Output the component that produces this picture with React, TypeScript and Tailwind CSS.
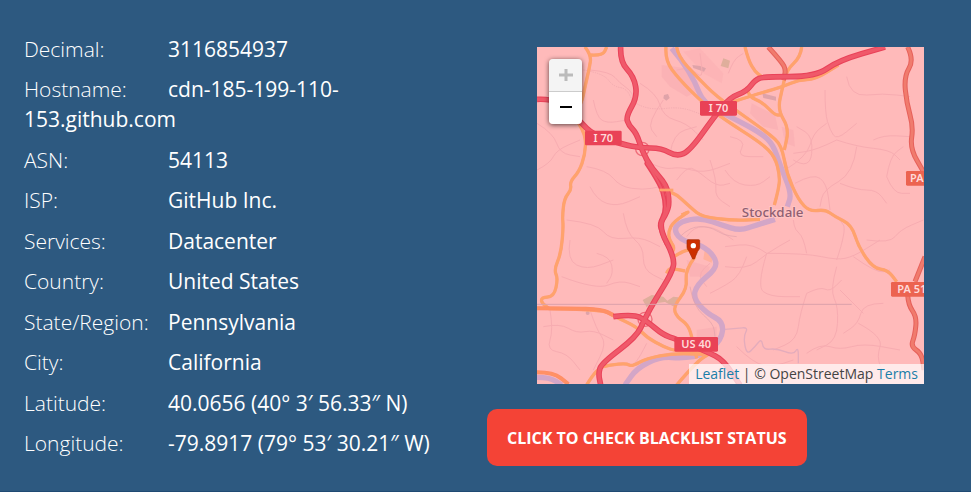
import React from "react";

type Point = [number, number];

// Turns "x,y x,y ..." into a path whose corners are rounded through the midpoints.
function curve(list: string): string {
  const pts = list.split(" ").map((p) => p.split(",").map(Number) as Point);
  let d = `M${pts[0][0]} ${pts[0][1]}`;
  for (let i = 1; i < pts.length - 1; i++) {
    const [x, y] = pts[i];
    const [nx, ny] = pts[i + 1];
    d += ` Q${x} ${y} ${(x + nx) / 2} ${(y + ny) / 2}`;
  }
  const last = pts[pts.length - 1];
  return `${d} L${last[0]} ${last[1]}`;
}

const details: [string, string][] = [
  ["Decimal:", "3116854937"],
  ["Hostname:", "cdn-185-199-110-153.github.com"],
  ["ASN:", "54113"],
  ["ISP:", "GitHub Inc."],
  ["Services:", "Datacenter"],
  ["Country:", "United States"],
  ["State/Region:", "Pennsylvania"],
  ["City:", "California"],
  ["Latitude:", "40.0656 (40° 3′ 56.33″ N)"],
  ["Longitude:", "-79.8917 (79° 53′ 30.21″ W)"],
];

const lanes = [
  "21,390 60,370 80,330 150,300",
  "180,90 240,95 270,130 300,150 310,170",
  "190,180 200,230 230,250 290,240",
  "21,250 70,280 90,340 150,350",
  "170,380 230,390 270,440 340,450 390,440",
  "180,440 200,480 260,500 330,470",
  "340,360 400,390 450,380 520,400 600,370",
  "440,420 470,380 500,390 560,440 600,430",
  "540,360 560,420 555,470 600,500",
  "330,130 380,160 400,230 470,250 520,300",
  "400,180 350,250 380,290",
  "420,340 430,280 500,260",
  "110,540 200,550 240,600 330,590 390,620",
  "280,520 290,580 340,620 340,690 400,720",
  "120,600 110,660 170,690 250,660",
  "95,710 200,750 270,720 330,740",
  "200,640 240,650 250,700 230,730",
  "40,860 90,850 140,880 190,870 250,900",
  "60,810 70,870 50,930 110,940 150,990",
  "180,810 200,870 230,910 190,990",
  "350,910 330,950 310,975",
  "540,760 600,730 630,700 650,650",
  "585,680 650,690 710,640 780,600",
  "710,640 680,740 720,770 810,770",
  "710,640 670,610 585,620",
  "710,640 830,640 920,660 970,650 1050,600",
  "830,640 820,590 795,570 790,540",
  "920,660 950,570 930,540",
  "830,760 810,820 800,900 730,930",
  "920,680 900,750 925,800 920,900 860,930",
  "830,760 870,740 900,755 935,720",
  "1010,600 1080,610 1110,570 1180,540",
  "970,650 1040,700 1080,690",
  "1060,790 1000,790 985,850 940,880",
  "985,850 1060,890 1040,950 1060,1000",
  "1000,820 960,780 930,750",
  "830,940 870,910 930,930 1000,910 1110,930",
  "620,920 670,970 730,980 790,960",
  "885,150 885,220 900,270 920,300 980,250",
  "920,300 980,320 1080,330 1110,360",
  "980,320 970,400 880,450 870,500",
  "920,300 860,330 790,340",
  "950,110 960,170 1060,160 1140,170",
  "1030,300 1060,285 1140,290",
  "1070,410 1080,350 1120,320",
  "1070,410 1090,460 1140,460",
  "930,430 980,450 1040,450 1070,490",
  "765,390 830,350 850,280 890,250",
  "790,360 840,390 850,290 800,260",
  "795,430 850,400 890,430 900,510",
  "600,290 650,300 620,350 700,350",
  "585,390 610,430 680,440 720,410",
  "595,100 610,60 640,40",
  "440,90 480,80 520,120 510,40",
  "470,590 490,560 550,560 610,600",
  "540,670 500,700 530,740",
];

const river = [
  "425,25 455,60 495,125 520,190 605,232 695,280 730,315 750,375 785,460 772,500",
  "735,538 680,555 630,572 575,555 520,535 465,540 430,562 450,600 515,615 555,650 560,685 500,735 490,775 530,820 580,845 575,900 520,945 460,955 390,950 320,985 285,1035",
  "21,1012 60,1012 95,1035",
];

const secondary = [
  "165,21 184,45 178,85 165,140 155,190 130,225 168,285 165,345 147,395 120,425 124,450 103,475 97,530 100,560 93,640 72,690 84,715 72,770 35,772 34,788 57,806",
  "182,45 218,47 230,21",
  "55,806 215,808 255,830 320,860 350,892 400,920 440,934 530,940",
  "170,1035 200,985 240,975 290,970 305,980 350,955 430,940 520,943",
  "440,1035 500,965 540,940",
  "408,21 405,60 445,115 520,190 585,240 695,310 735,350 750,410 745,450 733,495",
  "440,21 445,50 500,110 560,170 645,230 715,280 755,315 770,400 805,480 840,515 885,508 915,530 965,555 985,620 1030,685 1073,690 1100,725",
  "645,21 655,60 675,95 695,110",
  "815,21 812,50 770,90 757,145 743,210 777,265 763,330",
  "610,185 695,158 760,140 805,120 857,118 925,75",
  "650,140 655,170 695,185 735,225 750,225",
  "388,450 425,450 485,505 515,530 610,542 690,538",
  "455,525 490,507 430,545 415,575 418,600 434,622 425,640",
  "432,650 460,632 490,628",
  "495,650 465,690 472,745 430,800 440,830 475,855 488,900 500,955",
  "410,700 415,685 440,688 465,693",
];

const primary = ["21,805 120,805 215,808 250,825", "21,997 70,997 115,1032"];

const trunk = [
  "715,21 755,65 768,90 760,120",
  "1133,21 1152,60 1122,110 1130,190 1150,260 1140,325 1183,400",
  "1185,650 1155,725",
  "1133,765 1135,795 1160,830 1155,885 1142,920 1175,940 1182,990",
];

const motorway = [
  "21,178 60,176 110,200 150,245 190,285 275,312 330,324 395,324 440,350 480,332 553,230 600,172 650,154 675,120 700,110 857,110 925,62 1065,21",
  "272,21 270,65 312,110 322,170 288,230 296,255 320,280 337,335 365,385 410,435 418,485 412,515 385,560 435,655 425,700 375,780 345,835 320,890 215,970 205,1000 212,1035",
  "250,830 310,822 350,843 400,885 440,898 530,935 580,960 630,1035",
];

// The stretch where the two carriageways run apart from each other.
const carriageway = "350,370 390,430 405,480 405,520 388,550 395,575 410,610";

function Roads({ lines, casing, fill, width, inner }: {
  lines: string[];
  casing: string;
  fill: string;
  width: number;
  inner: number;
}) {
  return (
    <g fill="none">
      {lines.map((l) => (
        <path key={l} d={curve(l)} stroke={casing} strokeWidth={width} />
      ))}
      {lines.map((l) => (
        <path key={l} d={curve(l)} stroke={fill} strokeWidth={inner} />
      ))}
    </g>
  );
}

function Shield({ x, y, w, label, color }: { x: number; y: number; w: number; label: string; color: string }) {
  return (
    <g>
      <rect x={x} y={y} width={w} height="44" rx="4" fill={color} />
      <text x={x + w / 2} y={y + 34} textAnchor="middle" fontSize="33" fontWeight="600" fill="#ffdada">
        {label}
      </text>
    </g>
  );
}

function MapTiles() {
  return (
    <svg
      role="img"
      aria-label="Map of Stockdale"
      viewBox="21 21 1161 1011"
      preserveAspectRatio="xMidYMid slice"
      className="block h-full w-full font-['Noto_Sans',sans-serif]"
    >
      <rect x="0" y="0" width="1220" height="1060" fill="#ffbaba" />
      <g fill="#f9adb2">
        <path d="M395 75L470 85L500 155L470 170L420 140L395 110Z" opacity=".6" />
        <path d="M460 35L510 25L580 100L575 130L520 100Z" opacity=".4" />
        <path d="M665 190L735 225L745 270L700 260L660 220Z" opacity=".6" />
        <path d="M755 260L790 270L795 320L765 310Z" opacity=".6" />
        <path d="M470 660L540 680L530 710L480 710Z" opacity=".6" />
        <path d="M500 870L560 860L560 920L500 930Z" opacity=".6" />
      </g>
      <g fill="#dfae9c">
        <path d="M580 55L600 62L595 85L572 78Z" />
        <path d="M338 780L365 765L400 770L412 782L430 770L445 772L435 802L405 786L360 792L350 802Z" />
      </g>
      <path d="M525 625L550 638L545 668L520 658Z" fill="#ffb09d" />
      <g fill="#dfa3a9">
        <path d="M402 165L414 162L419 174L409 182L400 175Z" />
        <path d="M487 75L510 78L528 85L522 95L490 84Z" />
        <path d="M697 160L738 170L738 182L700 174Z" />
        <circle cx="173" cy="819" r="6" />
      </g>
      <g fill="none" stroke="#f7acb1" strokeWidth="3">
        {lanes.map((l) => (
          <path key={l} d={curve(l)} />
        ))}
      </g>
      <path
        d={curve("160,90 220,100 250,140 290,145 310,190 370,210 450,200 520,225")}
        fill="none"
        stroke="#eba5ac"
        strokeWidth="2"
        strokeDasharray="4 3"
      />
      <path
        d={curve("585,868 620,865 655,862 640,890 650,945 675,920 695,895 700,930 740,925 790,945 805,920 805,970")}
        fill="none"
        stroke="#e4acbc"
        strokeWidth="4"
      />
      <g fill="none" stroke="#d3a6c7" strokeWidth="16">
        {river.map((l) => (
          <path key={l} d={curve(l)} />
        ))}
      </g>
      <path d={curve("450,590 480,560 540,560 580,585 620,590")} fill="none" stroke="#e0a2aa" strokeWidth="2" />
      <path d={curve("480,740 490,800 550,850 555,890")} fill="none" stroke="#e0a2aa" strokeWidth="2" />
      <Roads lines={secondary} casing="#ffa07a" fill="#ffa36c" width={10} inner={8} />
      <Roads lines={primary} casing="#ff8c69" fill="#ff9165" width={12} inner={9} />
      <Roads lines={trunk} casing="#e6605a" fill="#f07b6d" width={15} inner={9} />
      <g fill="none" stroke="#ef6d7a" strokeWidth="4">
        <circle cx="337" cy="327" r="20" />
        <circle cx="345" cy="838" r="21" />
      </g>
      <path d={curve(carriageway)} fill="none" stroke="#e94259" strokeWidth="14" strokeLinecap="round" />
      <Roads lines={motorway} casing="#e94259" fill="#f0596a" width={17} inner={11} />
      <path d={curve(carriageway)} fill="none" stroke="#f0596a" strokeWidth="6" strokeLinecap="round" />
      <path d="M388 450H430" stroke="#ffa36c" strokeWidth="8" />
      <path d="M21 793H965" stroke="#dba2ab" strokeWidth="3" />
      <Shield x={165} y={272} w={110} label="I 70" color="#e94256" />
      <Shield x={510} y={183} w={111} label="I 70" color="#e94256" />
      <Shield x={433} y={891} w={131} label="US 40" color="#e94256" />
      <Shield x={1128} y={393} w={111} label="PA 88" color="#ec6350" />
      <Shield x={1083} y={726} w={125} label="PA 51" color="#ec6350" />
      <text
        x="728"
        y="530"
        textAnchor="middle"
        fontSize="40"
        fontWeight="500"
        fill="#8f5f72"
        stroke="#ffc4c4"
        strokeWidth="6"
        paintOrder="stroke"
      >
        Stockdale
      </text>
      <path d="M474 599H506Q509 599 509 602V622Q509 628 503 634L493 657H488L477 634Q471 628 471 622V602Q471 599 474 599Z" fill="#cc2f00" stroke="#a32a00" strokeWidth="2" />
      <circle cx="490" cy="617" r="8" fill="#fff" />
    </svg>
  );
}

function LocationMap() {
  return (
    <div className="relative ml-[50px] mr-[26px] h-[337px] overflow-hidden">
      <MapTiles />
      <div className="absolute left-3 top-3 flex w-[33px] flex-col overflow-hidden rounded shadow-[0_1px_5px_rgba(0,0,0,0.65)]">
        <button
          type="button"
          disabled
          aria-label="Zoom in"
          className="flex h-[33px] items-center justify-center border-b border-[#ccc] bg-[#f4f4f4]"
        >
          <svg viewBox="0 0 14 14" className="size-3.5" stroke="#bbb" strokeWidth="3">
            <path d="M0 7H14M7 1V13" />
          </svg>
        </button>
        <button type="button" aria-label="Zoom out" className="flex h-8 items-center justify-center bg-white">
          <svg viewBox="0 0 14 14" className="size-3.5" stroke="#000" strokeWidth="2">
            <path d="M1 6H13" />
          </svg>
        </button>
      </div>
      <div className="absolute bottom-0 right-0 bg-white/70 px-1.5 text-sm leading-5 text-[#444]">
        <a href="#leaflet" className="text-[#1a7ea8]">Leaflet</a> | © OpenStreetMap{" "}
        <a href="#terms" className="text-[#1a7ea8]">Terms</a>
      </div>
    </div>
  );
}

export default function App() {
  return (
    <main className="grid min-h-screen grid-cols-2 border-b border-[#1f4a73] bg-[#2d5980] pl-6 pr-[21px] font-['Open_Sans','Noto_Sans',sans-serif] text-white">
      <dl className="flex flex-col justify-between pb-[33px] pt-[34px] text-[21px] leading-[30px]">
        {details.map(([label, value]) => (
          <div key={label}>
            <dt className="inline-block w-36 font-light">{label}</dt>
            <dd className="inline">{value}</dd>
          </div>
        ))}
      </dl>
      <div className="pt-[47px]">
        <LocationMap />
        <button
          type="button"
          className="mt-[25px] h-[57px] rounded-[10px] bg-[#f44336] px-5 text-base font-bold uppercase whitespace-nowrap"
        >
          Click to check blacklist status
        </button>
      </div>
    </main>
  );
}
